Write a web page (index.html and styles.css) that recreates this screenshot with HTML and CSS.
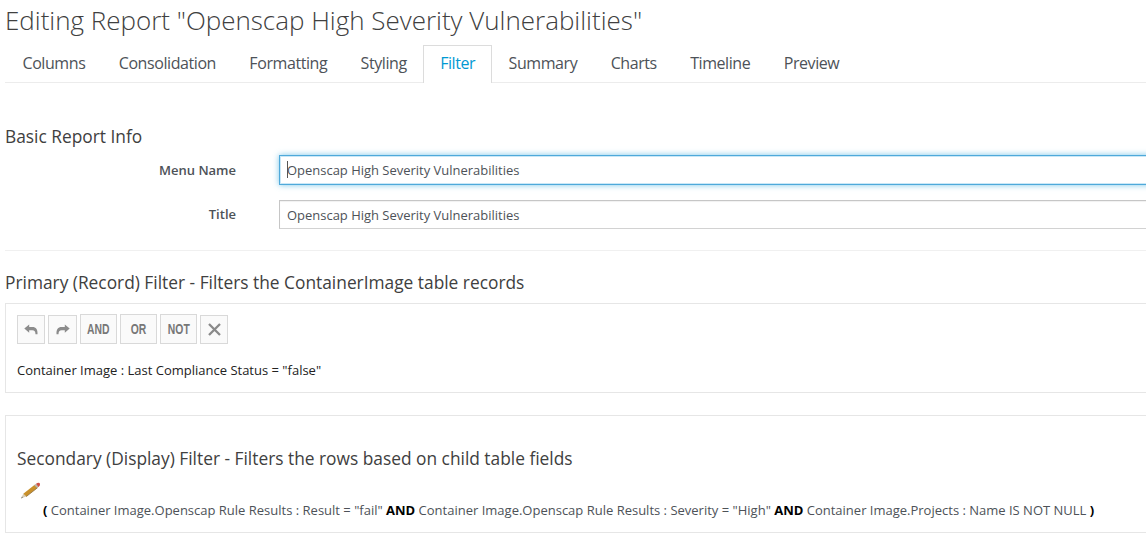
FILE: index.html
```html
<!DOCTYPE html>
<html lang="en">
<head>
<meta charset="utf-8">
<title>Editing Report</title>
<link rel="stylesheet" href="styles.css">
</head>
<body>
<main class="page">
  <h1 class="page-title">Editing Report "Openscap High Severity Vulnerabilities"</h1>
  <nav class="tabs">
    <a class="tab">Columns</a>
    <a class="tab">Consolidation</a>
    <a class="tab">Formatting</a>
    <a class="tab">Styling</a>
    <a class="tab active">Filter</a>
    <a class="tab">Summary</a>
    <a class="tab">Charts</a>
    <a class="tab">Timeline</a>
    <a class="tab">Preview</a>
  </nav>
  <section class="info">
    <h3 class="heading">Basic Report Info</h3>
    <div class="row">
      <span class="label">Menu Name</span>
      <div class="field focused"><span class="caret"></span>Openscap High Severity Vulnerabilities</div>
    </div>
    <div class="row">
      <span class="label">Title</span>
      <div class="field title-field">Openscap High Severity Vulnerabilities</div>
    </div>
  </section>
  <h3 class="heading primary">Primary (Record) Filter - Filters the ContainerImage table records</h3>
  <section class="panel primary-panel">
    <div class="toolbar">
      <span class="btn small"><svg width="14" height="12" viewBox="0 0 14 12"><path d="M.3 4.600 5.200.5v2.500h3.300c3.400 0 5.300 2.200 5 7.200h-2c-.1-2.900-.9-4-3.200-4H5.200v2.500z" fill="#8c8c8c"/></svg></span>
      <span class="btn small redo"><svg width="14" height="12" viewBox="0 0 14 12"><path d="M13.700 4.600 8.800.5v2.500H5.500C2.100 3 .2 5.200.5 10.200h2c.1-2.900.9-4 3.200-4h3.100v2.500z" fill="#8c8c8c"/></svg></span>
      <span class="btn word"><span>AND</span></span>
      <span class="btn word"><span>OR</span></span>
      <span class="btn word"><span>NOT</span></span>
      <span class="btn small remove"><svg width="13" height="13" viewBox="0 0 13 13"><path d="M1 1 12 12M12 1 1 12" stroke="#8a8a8a" stroke-width="2.300"/></svg></span>
    </div>
    <p class="expression dark">Container Image : Last Compliance Status = "false"</p>
  </section>
  <section class="panel secondary-panel">
    <h3 class="heading">Secondary (Display) Filter - Filters the rows based on child table fields</h3>
    <svg class="pencil" width="21" height="18" viewBox="0 0 21 18"><path d="M1 16.500 3.300 11.800 6.200 14.600z" fill="#d8cdb4"/><path d="M1 16.500 2 14.500 3 15.600z" fill="#777"/><path d="M3.300 11.800 14.700 2.800 17.700 5.600 6.200 14.600z" fill="#c9912b"/><path d="M6.200 14.600 17.700 5.600" stroke="#8c6a35" stroke-width=".8"/><path d="M14.200 3.200 16 1.800 19 4.500 17.200 6z" fill="#bbb5ad"/><path d="M16 1.800Q19 0 20 1.700 20.400 3.500 18.500 5z" fill="#cf5045"/></svg>
    <p class="expression nested"><b>(</b> Container Image.Openscap Rule Results : Result = "fail" <b>AND</b> Container Image.Openscap Rule Results : Severity = "High" <b>AND</b> Container Image.Projects : Name IS NOT NULL <b>)</b></p>
  </section>
</main>
</body>
</html>
```
FILE: styles.css
```css
* { box-sizing: border-box; }
body {
  margin: 0;
  background: #fff;
  color: #4d5258;
  font-family: "Open Sans", sans-serif;
  font-size: 13px;
  overflow: hidden;
}
.page { padding-left: 5px; }
.page-title {
  margin: 0;
  height: 45px;
  padding-top: 4px;
  line-height: 33px;
  font-size: 25.970px;
  font-weight: 300;
  color: #404040;
  white-space: nowrap;
}
.tabs {
  display: flex;
  height: 38px;
  padding-left: .8px;
  border-bottom: 1px solid #ececec;
}
.tab {
  height: 38px;
  padding: 0 15.700px;
  line-height: 35px;
  font-size: 16px;
  letter-spacing: -.42px;
  border: 1px solid transparent;
  border-bottom: 0;
  white-space: nowrap;
}
.active {
  color: #0099d3;
  background: #fff;
  border-color: #dcdcdc;
}
.info {
  height: 168px;
  padding-top: 40px;
  border-bottom: 1px solid #f0f0f0;
}
.heading {
  margin: 0;
  line-height: 27px;
  height: 26px;
  font-size: 17.330px;
  font-weight: 400;
  color: #404040;
  white-space: nowrap;
}
.row {
  display: flex;
  align-items: flex-start;
  height: 44px;
  padding-top: 6px;
}
.label {
  width: 231px;
  margin-right: 43px;
  line-height: 30px;
  font-size: 13px;
  font-weight: 600;
  text-align: right;
}
.field {
  position: relative;
  flex: 1;
  height: 30px;
  margin-right: -10px;
  padding-left: 7px;
  border: 1px solid #c6c6c6;
  box-shadow: inset 0 1px 1px rgba(0, 0, 0, .06);
  line-height: 28px;
  font-size: 12.970px;
}
.title-field {
  height: 29px;
  margin-top: 1px;
  border-bottom-color: #d2d2d2;
}
.focused {
  border-color: #4fa9da;
  box-shadow: inset 0 0 0 1px rgba(80, 180, 230, .3), 0 0 6px rgba(80, 180, 225, .75);
}
.caret {
  position: absolute;
  left: 7px;
  top: 5px;
  width: 1px;
  height: 17px;
  background: #555;
}
.primary {
  padding-top: 18px;
  height: 52px;
}
.panel {
  margin-right: -10px;
  border: 1px solid #e6e6e6;
  padding-left: 11px;
}
.primary-panel {
  height: 90px;
  padding-top: 10px;
}
.toolbar {
  display: flex;
  align-items: flex-end;
  height: 30px;
  gap: 3px;
}
.btn {
  display: flex;
  align-items: center;
  justify-content: center;
  border: 1px solid #d9d9d9;
  background: #fafafa;
}
.small { width: 28px; height: 29px; }
.redo { width: 29px; }
.word {
  width: 37px;
  height: 30px;
  font: bold 14px "Liberation Sans", sans-serif;
  color: #777;
}
.word span { transform: scaleX(.74); }
.expression {
  margin: 0;
  line-height: 18px;
  font-size: 13px;
  white-space: nowrap;
}
.dark { color: #222; margin-top: 17px; }
.secondary-panel {
  height: 118px;
  margin-top: 22px;
  padding-top: 29px;
}
.pencil { display: block; margin: 11px 0 0 3px; }
.nested { margin: 1px 0 0 26px; }
.nested b { color: #000; }
```
